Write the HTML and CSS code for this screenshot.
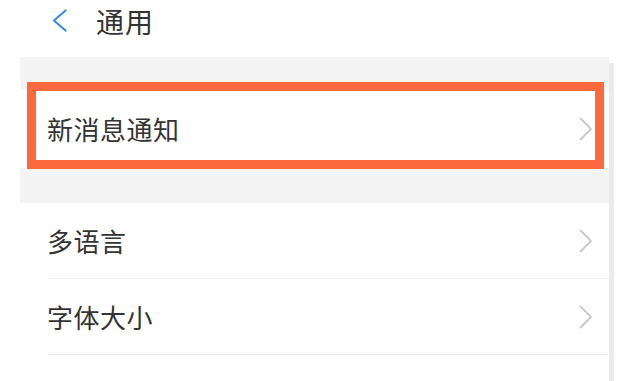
FILE: index.html
```html
<!DOCTYPE html>
<html lang="zh">
<head>
<meta charset="utf-8">
<link rel="stylesheet" href="styles.css">
</head>
<body>
<div class="page">
  <header class="topbar">
    <svg class="back" width="17" height="23" viewBox="0 0 17 23"><path d="M14.5 1.5 L3 11.5 L14.5 21.5" fill="none" stroke="#3a8de0" stroke-width="2.2" stroke-linecap="round" stroke-linejoin="round"/></svg>
    <h1 class="title">通用</h1>
  </header>
  <div class="list">
    <div class="band band-top"></div>
    <div class="row row-hl">
      <span class="label">新消息通知</span>
      <svg class="chev" width="14" height="24" viewBox="0 0 14 24"><path d="M1.5 1.5 L12 12 L1.5 22.5" fill="none" stroke="#c9c9c9" stroke-width="1.8" stroke-linecap="round" stroke-linejoin="round"/></svg>
      <div class="highlight"></div>
    </div>
    <div class="band band-mid"></div>
    <div class="row">
      <span class="label">多语言</span>
      <svg class="chev" width="14" height="24" viewBox="0 0 14 24"><path d="M1.5 1.5 L12 12 L1.5 22.5" fill="none" stroke="#c9c9c9" stroke-width="1.8" stroke-linecap="round" stroke-linejoin="round"/></svg>
    </div>
    <div class="row">
      <span class="label">字体大小</span>
      <svg class="chev" width="14" height="24" viewBox="0 0 14 24"><path d="M1.5 1.5 L12 12 L1.5 22.5" fill="none" stroke="#c9c9c9" stroke-width="1.8" stroke-linecap="round" stroke-linejoin="round"/></svg>
    </div>
    <div class="row">
      <span class="label faded">聊天背景</span>
      <svg class="chev" width="14" height="24" viewBox="0 0 14 24"><path d="M1.5 1.5 L12 12 L1.5 22.5" fill="none" stroke="#c9c9c9" stroke-width="1.8" stroke-linecap="round" stroke-linejoin="round"/></svg>
    </div>
  </div>
  <div class="scrollbar"></div>
</div>
</body>
</html>
```
FILE: styles.css
```css
html, body {
  margin: 0;
  padding: 0;
  background: #ffffff;
  overflow: hidden;
}
body {
  font-family: "Noto Sans CJK SC", "Noto Sans", sans-serif;
  color: #333333;
}
.page {
  position: relative;
  width: 618px;
  height: 381px;
  overflow: hidden;
}
.topbar {
  height: 57px;
  display: flex;
  align-items: flex-start;
  padding-left: 51px;
  box-sizing: border-box;
}
.back {
  margin-top: 9px;
  flex: none;
}
.title {
  margin: 0 0 0 28px;
  font-size: 28px;
  font-weight: 400;
  line-height: 42px;
  color: #333;
  letter-spacing: 1px;
}
.list {
  margin-left: 20px;
  width: 589px;
}
.band {
  background: #f4f4f4;
}
.band-top { height: 33px; }
.band-mid { height: 35px; }
.row {
  position: relative;
  height: 76px;
  display: flex;
  align-items: center;
  justify-content: space-between;
  padding: 0 16px 0 27px;
  box-sizing: border-box;
  background: #fff;
}
.row::after {
  content: "";
  position: absolute;
  left: 28px;
  right: 0;
  bottom: 0;
  height: 1px;
  background: #efefef;
}
.row-hl {
  height: 78px;
}
.row-hl::after { display: none; }
.label {
  font-size: 26px;
  line-height: 36px;
  color: #333;
  letter-spacing: 0.5px;
}
.faded { color: #bbbbbb; }
.chev { flex: none; }
.highlight {
  position: absolute;
  left: 7px;
  right: 5px;
  top: -8px;
  bottom: -1px;
  border: 9px solid #fb6a3d;
  pointer-events: none;
}
.scrollbar {
  position: absolute;
  top: 63px;
  left: 609px;
  width: 5px;
  bottom: 0;
  background: #ebebeb;
}
```
